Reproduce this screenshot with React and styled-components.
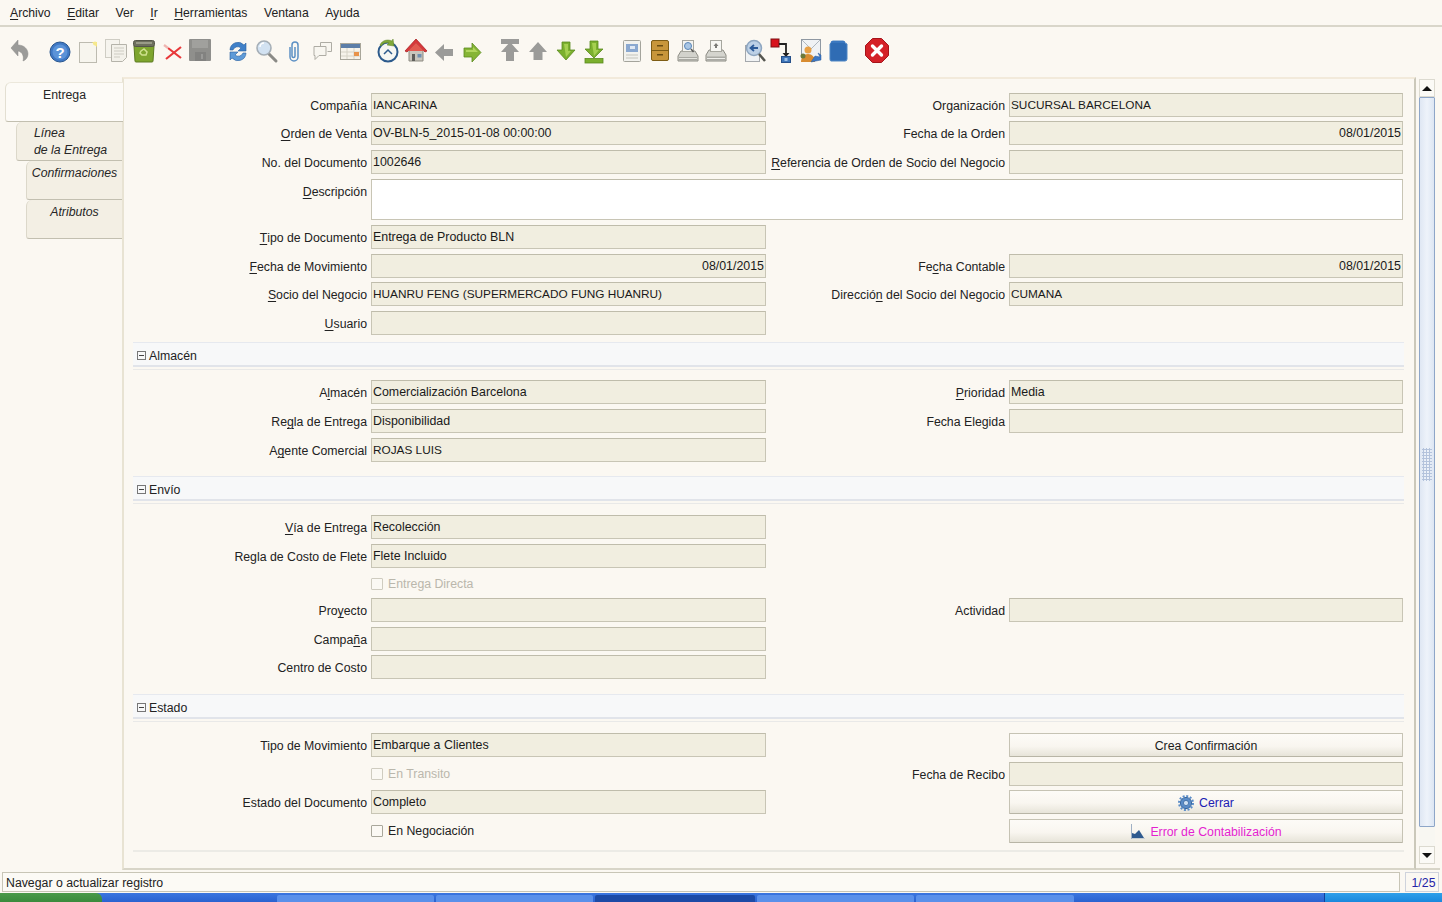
import React from "react";
import styled, { createGlobalStyle } from "styled-components";

const Global = createGlobalStyle`
  html, body { margin: 0; padding: 0; background: #fbf8f2; }
  body { font-family: "Liberation Sans", Arial, sans-serif; font-size: 12.3px; color: #1c1c1c; overflow: hidden; }
  u { text-underline-offset: 2px; text-decoration-thickness: 1px; }
`;

const Page = styled.div`
  width: 1442px; height: 902px; display: flex; flex-direction: column; overflow: hidden; background: #fbf8f2;
`;
const MenuBar = styled.nav`
  flex: none; display: flex; align-items: center; gap: 16.5px; padding: 1px 0 1px 10px; font-size: 12.2px;
  border-bottom: 2px solid #d9d6ca; box-sizing: content-box; height: 23px;
`;
const MenuItem = styled.span`color: #222;`;
const ToolBar = styled.div`
  height: 50px; flex: none; display: flex; align-items: flex-start; padding: 10px 0 0 6px; box-sizing: border-box;
`;
const ToolButton = styled.button`
  width: 28px; height: 28px; flex: none; padding: 0; border: 0; background: none; margin-left: ${p => p.$gap || 0}px;
  svg { display: block; }
`;
const Main = styled.div`flex: 1; display: flex; min-height: 0;`;
const Tabs = styled.div`width: 122px; flex: none; padding-top: 5px; box-sizing: border-box; position: relative; z-index: 1;`;
const Tab = styled.div`
  height: ${p => p.$h}px; box-sizing: border-box; margin-left: ${p => p.$indent}px;
  padding: ${p => p.$active ? "4px 0 0" : p.$left ? "3px 0 0 17px" : "4px 0 0"};
  text-align: ${p => p.$left ? "left" : "center"}; font-style: ${p => p.$active ? "normal" : "italic"};
  line-height: 17px; background: ${p => p.$active ? "#fdfbf7" : "#f3efe4"};
  border-left: 1px solid ${p => p.$active ? "#e3dfd2" : "#dcd8ca"}; border-bottom: 1px solid #c2bfb0;
  border-top: ${p => p.$active ? "1px solid #ece8dc" : "0"};
  border-radius: 6px 0 0 3px; margin-right: ${p => p.$active ? "-1px" : "0"}; white-space: pre-line;
  color: #262626;
`;
const Panel = styled.section`
  width: 1294px; flex: none; box-sizing: border-box; padding: 14px 0 0 9px;
  border-top: 2px solid #f2eadb; border-left: 2px solid #e8e3d3; border-right: 2px solid #cbc8ba; border-bottom: 2px solid #d8d5c8;
`;
const Row = styled.div`
  height: ${p => p.$h}px; display: grid; grid-template-columns: 234px 395px 235px 394px; column-gap: 4px; align-items: start;
`;
const Label = styled.label`
  height: 24px; display: flex; align-items: center; justify-content: flex-end; padding-top: 2px; box-sizing: border-box; white-space: pre; color: #222;
`;
const Field = styled.div`
  height: ${p => p.$tall ? 41 : 24}px; box-sizing: border-box; display: flex; align-items: center;
  justify-content: ${p => p.$right ? "flex-end" : "flex-start"}; padding: 0 1px; white-space: pre;
  font-size: ${p => p.$caps ? "11.8px" : "12.4px"};
  background: ${p => p.$tall ? "#ffffff" : "#f1eee0"}; border: 1px solid #c8c5b5; border-top-color: #bfbcab; color: #1a1a1a;
`;
const TallField = styled(Field)`grid-column: 2 / 5;`;
const CheckRow = styled.div`height: 24px; display: flex; align-items: center; gap: 5px; color: ${p => p.$off ? "#bab7ac" : "#222"};`;
const Box = styled.span`
  width: 10px; height: 10px; border: 1px solid ${p => p.$off ? "#cfccc0" : "#a9a79b"}; border-radius: 1px; background: #fbf9f4; margin-top: -1px;
`;
const ActionButton = styled.button`
  height: 24px; box-sizing: border-box; display: flex; align-items: center; justify-content: center; gap: 5px; padding: 1px 0 0;
  font: inherit; color: ${p => p.$color || "#1c1c1c"}; border: 1px solid #c6c3b4; border-bottom-color: #b8b5a6; border-radius: 1px;
  background: linear-gradient(#fdfbf7 0%, #f9f6f0 55%, #e7e4d9 100%);
`;
const Section = styled.div`height: ${p => p.$h}px; width: 1271px;`;
const SectionHead = styled.div`
  height: 25px; box-sizing: border-box; display: flex; align-items: center; gap: 3px; padding: 3px 0 0 4px;
  background: #f7f8f9; border-top: 1px solid #e6e9ef; border-bottom: 2px solid #e1e4ea; box-shadow: 0 2px 0 #fbf8f2, 0 3px 0 #e9e9e8;
  color: #222;
`;
const Minus = styled.span`
  width: 9px; height: 9px; border: 1px solid #777; box-sizing: border-box; position: relative; display: block;
  &::after { content: ""; position: absolute; left: 1px; right: 1px; top: 3px; height: 1px; background: #444; }
`;
const EndLine = styled.div`width: 1271px; height: 2px; background: #ecebe6; margin-top: 2px;`;
const ScrollBar = styled.div`
  width: 24px; flex: none; box-sizing: border-box; padding: 2px 5px 4px 3px; display: flex; flex-direction: column;
  border-bottom: 2px solid #d8d5c8;
`;
const ScrollBtn = styled.div`
  height: 16px; flex: none; border: 1px solid #dcdad0; background: #fbfaf6; display: flex; align-items: center; justify-content: center;
`;
const Track = styled.div`flex: 1; display: flex; flex-direction: column; background: #f8f7f2; min-height: 0;`;
const Thumb = styled.div`
  height: 730px; flex: none; box-sizing: border-box; border: 1px solid #8ea6c8; border-radius: 1px; display: flex; align-items: flex-start; justify-content: center;
  padding-top: 350px; background: linear-gradient(90deg, #dfe7f3, #eef3fa 50%, #dde6f3);
`;
const Grip = styled.div`
  width: 10px; height: 33px; background-image: radial-gradient(#b4c3dc 1px, transparent 1.2px); background-size: 3px 3px;
`;
const Arrow = styled.span`
  width: 0; height: 0; border-left: 5px solid transparent; border-right: 5px solid transparent;
  ${p => p.$down ? "border-top: 5px solid #111;" : "border-bottom: 5px solid #111;"}
`;
const StatusBar = styled.footer`
  height: 20px; flex: none; margin: 2px 3px 1px 2px; display: flex; gap: 5px;
`;
const StatusText = styled.div`
  flex: 1; border: 1px solid #c8c5b6; display: flex; align-items: center; padding: 1px 0 0 3px; color: #222; background: #fcfaf5;
`;
const Counter = styled.div`
  width: 34px; box-sizing: border-box; border: 1px solid #cfd3dc; color: #2323a8; display: flex; align-items: center; justify-content: center; padding: 1px 0 0 3px;
`;
const TaskBar = styled.div`
  height: 9px; flex: none; display: flex; background: linear-gradient(#3b76e0, #2a62d0);
`;
const Start = styled.div`width: 102px; flex: none; background: linear-gradient(#4a9a4a, #3a8a3c); border-radius: 0 6px 0 0;`;
const TaskGap = styled.div`width: ${p => p.$w}px; flex: none;`;
const TaskItem = styled.div`
  width: ${p => p.$w}px; flex: none; margin-right: 2px; margin-top: 2px;
  background: ${p => p.$active ? "#1c4aa6" : "#5a90ea"}; border-radius: 2px 2px 0 0;
`;
const Tray = styled.div`flex: 1; background: linear-gradient(#2fa0ea, #1a88dc); border-left: 1px solid #123f9a;`;

const mark = t => {
  const i = t.indexOf("_");
  if (i < 0) return t;
  return <>{t.slice(0, i)}<u>{t[i + 1]}</u>{t.slice(i + 2)}</>;
};

const I = ({ children }) => <svg width="28" height="28" viewBox="0 0 28 28" aria-hidden="true">{children}</svg>;
const G = "#9b9b99";

const Icons = {
  undo: <I><path d="M5 11 12 3v5c6 0 10 4 10 9 0 3-2 6-5 7 1-4 0-9-5-10v5z" fill={G} stroke="#8a8a88" strokeWidth=".5" /></I>,
  help: <I><circle cx="14" cy="15" r="10" fill="#3f78c4" stroke="#28568f" strokeWidth="1" /><circle cx="14" cy="15" r="7.5" fill="#5b93d8" /><text x="14" y="20.5" textAnchor="middle" fontFamily="Liberation Sans" fontWeight="700" fontSize="15" fill="#fff">?</text></I>,
  newDoc: <I><rect x="5.5" y="5.5" width="17" height="20" fill="#f7f5ee" stroke="#bdbbb0" /><path d="M18 5h5v5z" fill="#f5e37a" /><circle cx="21" cy="6.5" r="2" fill="#f6e98e" /></I>,
  copy: <I><rect x="3.5" y="2.5" width="14" height="18" fill="#f6f4ee" stroke="#cfcdc4" /><path d="M9.5 7.5h15v13l-4 4h-11z" fill="#f3f1ea" stroke="#b5b3aa" /><path d="M12 11h10M12 14h10M12 17h10M12 20h6" stroke="#cdcbc2" /></I>,
  bin: <I><path d="M4 9h20l-1 15q0 1-1 1H6q-1 0-1-1z" fill="#7ea52e" stroke="#5c7a20" /><rect x="3.5" y="3.5" width="21" height="6" rx="2" fill="#6d6f5e" stroke="#55564a" /><rect x="6" y="5" width="16" height="2" fill="#999b88" /><path d="M11 14l3-2 3 3-1 3h-4l-2-2z" fill="none" stroke="#cfe28f" strokeWidth="1.5" /></I>,
  del: <I><path d="M10 11 23 21M23 10 8 22" stroke="#e8383a" strokeWidth="2.2" /><path d="M6 8l4 3" stroke="#efb5b0" strokeWidth="2.2" /></I>,
  save: <I><rect x="3" y="2" width="22" height="22" rx="1" fill="#8f8f8c" /><rect x="6" y="3" width="16" height="8" fill="#a0a09d" /><rect x="9" y="15" width="11" height="9" fill="#828280" /><rect x="15" y="17" width="2" height="5" fill="#9a9a98" /></I>,
  refresh: <I><path d="M6 13a8 8 0 0 1 14-5l2-2v8h-8l3-3a5 5 0 0 0-8 2z" fill="#3f80c8" stroke="#2a5f9f" strokeWidth=".6" /><path d="M22 16a8 8 0 0 1-14 5l-2 2v-8h8l-3 3a5 5 0 0 0 8-2z" fill="#5f9bd8" stroke="#2a5f9f" strokeWidth=".6" /></I>,
  find: <I><path d="M17 17l7 7" stroke="#8a8a86" strokeWidth="3" strokeLinecap="round" /><circle cx="12" cy="11" r="7" fill="#d2e2f2" stroke="#a5aeb6" strokeWidth="1.6" /><path d="M8 10a4 4 0 0 1 4-4" stroke="#fff" strokeWidth="1.5" fill="none" /></I>,
  clip: <I><path d="M10 10v10a4 4 0 0 0 8 0V8a3 3 0 0 0-6 0v11a1.5 1.5 0 0 0 3 0V10" fill="none" stroke="#5c90c4" strokeWidth="1.5" /></I>,
  chat: <I><path d="M12.5 9.500v-4h11v9h-4" fill="#f8f6f0" stroke="#aeaca4" /><path d="M6 9.5h12v9H11l-4 4v-4H6z" fill="#f8f6f0" stroke="#aeaca4" /></I>,
  cal: <I><rect x="4.5" y="6.500" width="20" height="16" fill="#f6f3ea" stroke="#a8a69a" /><rect x="5" y="7" width="19" height="4" fill="#5c7ea8" /><path d="M5 15h19M5 19h19M11 11v11M18 11v11" stroke="#d6d3c6" /><rect x="18" y="15" width="5" height="4" fill="#e8934a" /></I>,
  hist: <I><circle cx="14" cy="15" r="9.5" fill="#f6f6f2" stroke="#2c5a8c" strokeWidth="2" /><path d="M10 17l4-4 4 4" fill="none" stroke="#2c5a8c" strokeWidth="1.5" /><path d="M6 8c2-5 8-6 12-4l1-2 1 7-7-1 2-2c-3-1-6 0-8 3z" fill="#7fa83a" stroke="#5d8226" strokeWidth=".5" /></I>,
  home: <I><path d="M7 13h14v11H7z" fill="#c9c6bc" stroke="#8d8b82" /><path d="M14 2 3 14l2 1 9-9 9 9 2-1z" fill="#d8373a" stroke="#a82426" strokeWidth=".8" /><path d="M14 6 6 14h16z" fill="#e25a50" /><rect x="10" y="17" width="3" height="7" fill="#5e5e5a" /><rect x="15.5" y="17" width="4" height="3.5" fill="#6f8fb0" /></I>,
  left: <I><path d="M5 15.5 14 7v5h9v7h-9v5z" fill={G} /></I>,
  right: <I><path d="M23 15.5 14 6v5H6v9h8v5z" fill="#86b536" stroke="#5a8a1f" strokeWidth=".8" /><path d="M8 13h7v-3l5 5H8z" fill="#b1d65e" /></I>,
  first: <I><rect x="5" y="2" width="18" height="5" fill={G} /><path d="M14 5 5 15h5v9h8v-9h5z" fill={G} /></I>,
  up: <I><path d="M14 5 5 15h4.5v8h9v-8H23z" fill={G} /></I>,
  down: <I><path d="M14 23 5 13h5V5h8v8h5z" fill="#7bb02e" stroke="#5a8a1f" strokeWidth=".8" /><path d="M12 7h4v7h3l-5 6z" fill="#a5d050" /></I>,
  last: <I><path d="M14 21 5 12h5V4h8v8h5z" fill="#7bb02e" stroke="#5a8a1f" strokeWidth=".8" /><path d="M12 6h4v7h3l-5 6z" fill="#a5d050" /><rect x="5" y="21.5" width="18" height="4.5" fill="#7bb02e" stroke="#5a8a1f" strokeWidth=".8" /></I>,
  report: <I><rect x="5.5" y="3.5" width="17" height="21" rx="1" fill="#f2f2ee" stroke="#a4a49c" /><rect x="8" y="7" width="12" height="8" fill="#8aa8d0" /><rect x="12" y="9" width="5" height="3" fill="#dfe8f4" /><path d="M8 18h12M8 21h12" stroke="#c4c4bc" /></I>,
  archive: <I><rect x="5.5" y="3.5" width="17" height="20" rx="1.5" fill="#c8963a" stroke="#7d5c14" /><path d="M6 13.5h16" stroke="#7d5c14" /><rect x="11" y="8" width="6" height="1.5" fill="#6a4c10" /><rect x="11" y="17" width="6" height="1.5" fill="#6a4c10" /></I>,
  preview: <I><path d="M7 14h14l3 5v5H4v-5z" fill="#d2d2cc" stroke="#8e8e86" /><rect x="8.5" y="3.5" width="11" height="11" fill="#f4f4f0" stroke="#a6a69e" /><circle cx="14" cy="9" r="3.500" fill="#a9c6e4" stroke="#5a86b8" /><path d="M17 12l2.500 3" stroke="#5a5a58" strokeWidth="1.500" /><rect x="5" y="20" width="18" height="3.500" fill="#a8a8a2" /><path d="M5 21.500h18" stroke="#e4e4de" /></I>,
  print: <I><path d="M7 13h14l3 5v6H4v-6z" fill="#d4d4ce" stroke="#8a8a82" /><rect x="8.5" y="3.5" width="11" height="11" fill="#f6f6f2" stroke="#a6a69e" /><path d="M14 6l-2.500 3h5zM13 9h2v2h-2z" fill="#7a7a76" /><rect x="5" y="19.500" width="18" height="4" fill="#aaaaa4" /><path d="M5 21.500h18" stroke="#eeeeea" /></I>,
  zoom: <I><rect x="5.5" y="8.5" width="14" height="16" fill="#f1f3f4" stroke="#a4a8ac" /><circle cx="14" cy="11" r="7.5" fill="#bcd0e6" stroke="#8ea6c0" strokeWidth="1.5" /><path d="M18 11h-7M14 8l-3.500 3 3.500 3" fill="none" stroke="#2c5a98" strokeWidth="1.8" /><path d="M19 17l6 7" stroke="#55554f" strokeWidth="2.500" /></I>,
  flow: <I><rect x="3" y="2" width="8" height="8" fill="#d8121c" stroke="#7e0f12" /><path d="M11 7h7v11" fill="none" stroke="#222" strokeWidth="1.800" /><path d="M14.5 16h7L18 20z" fill="#222" /><rect x="13.5" y="19.5" width="9" height="6" fill="#3c74b8" stroke="#26508a" /><rect x="16.5" y="21" width="3" height="3" fill="#9cc0e8" /></I>,
  request: <I><rect x="5.5" y="2.5" width="19" height="18" fill="#f0f2f4" stroke="#8f98a2" /><path d="M6 3l9 9 9-9" fill="none" stroke="#b0b8c0" /><circle cx="12" cy="13" r="3.500" fill="#e8a044" /><path d="M5 25c0-5 3-8 7-8s7 3 7 8z" fill="#d88c30" /><circle cx="7" cy="19" r="2.500" fill="#6b7a3c" /><path d="M15 25l4-6 5 1-2-4 3 2v5z" fill="#3c78c4" stroke="#285a9c" strokeWidth=".5" /></I>,
  product: <I><path d="M7 6q0-2 2-2h10q2 0 2 2l2 1v15q0 2-2 2H7q-1 0-1-2V7z" fill="#2f6cb4" stroke="#4f86c4" /><path d="M7 6q0-2 2-2h10q2 0 2 2z" fill="#3a78c0" /></I>,
  close: <I><path d="M9.5 1.5h9l7 7v10l-7 7h-9l-7-7v-10z" fill="#d42128" stroke="#a5141a" /><path d="M9.5 9l9 9M18.500 9l-9 9" stroke="#fff" strokeWidth="3.400" strokeLinecap="round" /></I>,
};

const tools = [
  ["undo", 0], ["help", 12], ["newDoc", 0], ["copy", 0], ["bin", 0], ["del", 0], ["save", 0],
  ["refresh", 10], ["find", 0], ["clip", 0], ["chat", 0], ["cal", 0],
  ["hist", 10], ["home", 0], ["left", 0], ["right", 0],
  ["first", 10], ["up", 0], ["down", 0], ["last", 0],
  ["report", 10], ["archive", 0], ["preview", 0], ["print", 0],
  ["zoom", 10], ["flow", 0], ["request", 0], ["product", 0],
  ["close", 11],
];

const menus = ["_Archivo", "_Editar", "Ver", "_Ir", "_Herramientas", "Ventana", "Ayuda"];

const Gear = () => (
  <svg width="16" height="16" viewBox="0 0 16 16" aria-hidden="true">
    <circle cx="8" cy="8" r="5.6" fill="#5a8cc8" stroke="#3a689f" strokeWidth="1" />
    <circle cx="8" cy="8" r="7" fill="none" stroke="#5a8cc8" strokeWidth="2" strokeDasharray="2 1.67" />
    <circle cx="8" cy="8" r="2.6" fill="#cfe0f2" stroke="#3a689f" strokeWidth=".8" />
  </svg>
);
const ChartIcon = () => (
  <svg width="15" height="15" viewBox="0 0 15 15" aria-hidden="true">
    <path d="M1.5 0v15H15" fill="none" stroke="#9fb0c4" />
    <path d="M2 14V9l3 1 4-4 5 8z" fill="#2f5a8f" />
  </svg>
);

const isCaps = v => !!v && /[A-Z]{3}/.test(v) && v === v.toUpperCase() && !/\d/.test(v);

const FieldRow = ({ h, l, v, rl, rv }) => (
  <Row $h={h}>
    <Label>{mark(l)}</Label>
    <Field $right={!!v && v.includes("/")} $caps={isCaps(v)}>{v}</Field>
    {rl ? <Label>{mark(rl)}</Label> : null}
    {rl ? <Field $right={!!rv && rv.includes("/")} $caps={isCaps(rv)}>{rv}</Field> : null}
  </Row>
);
const Check = ({ h, text, off, children }) => (
  <Row $h={h}>
    <span />
    <CheckRow $off={off}><Box $off={off} />{text}</CheckRow>
    {children}
  </Row>
);
const SectionBar = ({ h, title }) => (
  <Section $h={h}><SectionHead><Minus />{title}</SectionHead></Section>
);

export default function App() {
  return (
    <Page>
      <Global />
      <MenuBar>{menus.map(m => <MenuItem key={m}>{mark(m)}</MenuItem>)}</MenuBar>
      <ToolBar>{tools.map(([k, g]) => <ToolButton key={k} $gap={g}>{Icons[k]}</ToolButton>)}</ToolBar>
      <Main>
        <Tabs>
          <Tab $active $h={40} $indent={5}>Entrega</Tab>
          <Tab $left $h={39} $indent={16}>{"Línea\nde la Entrega"}</Tab>
          <Tab $h={39} $indent={26}>Confirmaciones</Tab>
          <Tab $h={39} $indent={26}>Atributos</Tab>
        </Tabs>
        <Panel>
          <FieldRow h={28} l="Compañía" v="IANCARINA" rl="Organización" rv="SUCURSAL BARCELONA" />
          <FieldRow h={29} l="_Orden de Venta" v="OV-BLN-5_2015-01-08 00:00:00" rl="Fecha de la Orden" rv="08/01/2015" />
          <FieldRow h={29} l="No. del Documento" v="1002646" rl="_Referencia de Orden de Socio del Negocio" rv="" />
          <Row $h={46}><Label>{mark("_Descripción")}</Label><TallField $tall /></Row>
          <FieldRow h={29} l="_Tipo de Documento" v="Entrega de Producto BLN" />
          <FieldRow h={28} l="_Fecha de Movimiento" v="08/01/2015" rl="Fe_cha Contable" rv="08/01/2015" />
          <FieldRow h={29} l="_Socio del Negocio" v="HUANRU FENG (SUPERMERCADO FUNG HUANRU)" rl="Direcció_n del Socio del Negocio" rv="CUMANA" />
          <FieldRow h={31} l="_Usuario" v="" />
          <SectionBar h={38} title="Almacén" />
          <FieldRow h={29} l="A_lmacén" v="Comercialización Barcelona" rl="_Prioridad" rv="Media" />
          <FieldRow h={29} l="Re_gla de Entrega" v="Disponibilidad" rl="Fecha Elegida" rv="" />
          <FieldRow h={38} l="A_gente Comercial" v="ROJAS LUIS" />
          <SectionBar h={39} title="Envío" />
          <FieldRow h={29} l="_Vía de Entrega" v="Recolección" />
          <FieldRow h={28} l="Regla de Costo de Flete" v="Flete Incluido" />
          <Check h={26} text="Entrega Directa" off />
          <FieldRow h={29} l="Pro_yecto" v="" rl="Actividad" rv="" />
          <FieldRow h={28} l="Campa_ña" v="" />
          <FieldRow h={39} l="Centro de Costo" v="" />
          <SectionBar h={39} title="Estado" />
          <Row $h={29}>
            <Label>Tipo de Movimiento</Label><Field>Embarque a Clientes</Field><span />
            <ActionButton>Crea Confirmación</ActionButton>
          </Row>
          <Check h={28} text="En Transito" off>
            <Label>Fecha de Recibo</Label><Field />
          </Check>
          <Row $h={29}>
            <Label>Estado del Documento</Label><Field>Completo</Field><span />
            <ActionButton $color="#2020b4"><Gear />Cerrar</ActionButton>
          </Row>
          <Check h={29} text="En Negociación">
            <span />
            <ActionButton $color="#e41fd0"><ChartIcon />Error de Contabilización</ActionButton>
          </Check>
          <EndLine />
        </Panel>
        <ScrollBar>
          <ScrollBtn><Arrow /></ScrollBtn>
          <Track><Thumb><Grip /></Thumb></Track>
          <ScrollBtn><Arrow $down /></ScrollBtn>
        </ScrollBar>
      </Main>
      <StatusBar>
        <StatusText>Navegar o actualizar registro</StatusText>
        <Counter>1/25</Counter>
      </StatusBar>
      <TaskBar>
        <Start />
        <TaskGap $w={175} />
        <TaskItem $w={157} /><TaskItem $w={157} /><TaskItem $w={160} $active />
        <TaskItem $w={157} /><TaskItem $w={158} />
        <TaskGap $w={248} />
        <Tray />
      </TaskBar>
    </Page>
  );
}
